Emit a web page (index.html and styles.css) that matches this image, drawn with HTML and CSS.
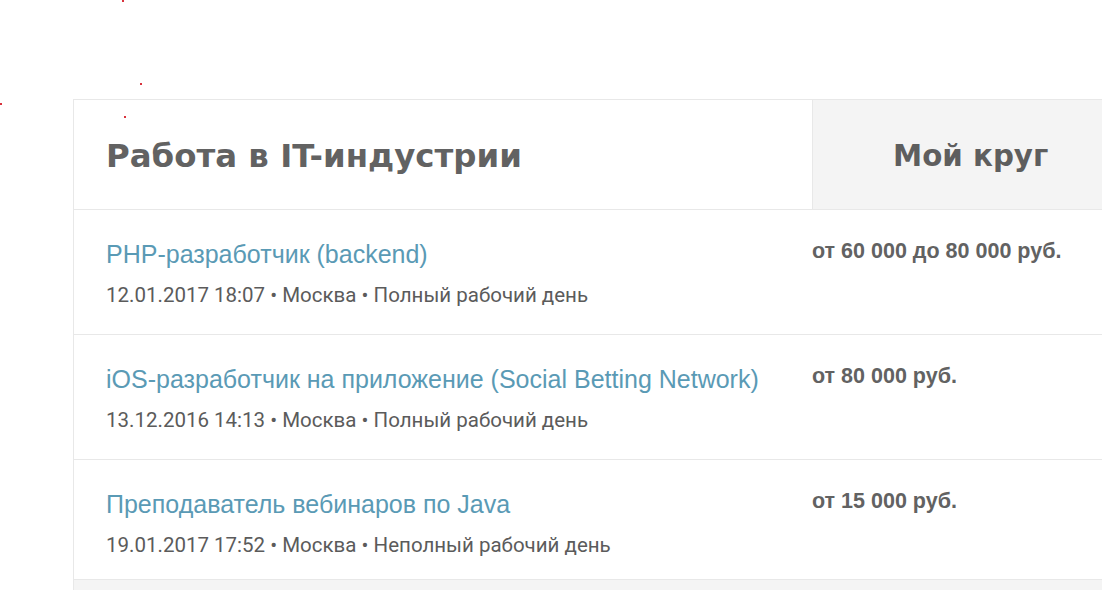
FILE: index.html
```html
<!DOCTYPE html>
<html lang="ru">
<head>
  <meta charset="UTF-8">
  <title>Работа в IT-индустрии</title>
  <link rel="stylesheet" href="styles.css">
</head>
<body>
  <span class="dot" style="left:122px;top:0px"></span>
  <span class="dot" style="left:140px;top:83px"></span>
  <span class="dot" style="left:0px;top:103px"></span>
  <span class="dot" style="left:124px;top:116px"></span>

  <div class="widget">
    <div class="widget-head">
      <h1>Работа в IT-индустрии</h1>
      <div class="brand">Мой круг</div>
    </div>

    <div class="job">
      <div class="job-info">
        <a href="#" class="job-title">PHP-разработчик (backend)</a>
        <div class="job-meta">12.01.2017 18:07 • Москва • Полный рабочий день</div>
      </div>
      <div class="job-salary">от 60 000 до 80 000 руб.</div>
    </div>

    <div class="job">
      <div class="job-info">
        <a href="#" class="job-title">iOS-разработчик на приложение (Social Betting Network)</a>
        <div class="job-meta">13.12.2016 14:13 • Москва • Полный рабочий день</div>
      </div>
      <div class="job-salary">от 80 000 руб.</div>
    </div>

    <div class="job last">
      <div class="job-info">
        <a href="#" class="job-title">Преподаватель вебинаров по Java</a>
        <div class="job-meta">19.01.2017 17:52 • Москва • Неполный рабочий день</div>
      </div>
      <div class="job-salary">от 15 000 руб.</div>
    </div>

    <div class="widget-foot"></div>
  </div>
</body>
</html>
```

FILE: styles.css
```css
body {
  margin: 0;
  padding-top: 99px;
  background-color: #ffffff;
  overflow: hidden;
  font-family: "Liberation Sans", Arial, sans-serif;
  color: #666;
}
.dot {
  position: absolute;
  width: 2px;
  height: 2px;
  background-color: #d8323c;
}
.widget {
  margin-left: 73px;
  border-top: 1px solid #e8e8e8;
  border-left: 1px solid #e8e8e8;
}
.widget-head {
  display: flex;
  height: 109px;
  border-bottom: 1px solid #e8e8e8;
}
.widget-head h1 {
  width: 706px;
  margin: 0;
  padding-left: 32px;
  font-family: "DejaVu Sans", Verdana, sans-serif;
  font-size: 32.4px;
  font-weight: bold;
  line-height: 113px;
  color: #626262;
  border-right: 1px solid #e8e8e8;
}
.brand {
  flex: 1;
  padding-left: 80px;
  background-color: #f4f4f4;
  font-family: "DejaVu Sans", Verdana, sans-serif;
  font-size: 29.3px;
  font-weight: bold;
  line-height: 113px;
  color: #5e5e5e;
  white-space: nowrap;
}
.job {
  display: flex;
  height: 124px;
  border-bottom: 1px solid #e8e8e8;
}
.job.last {
  height: 119px;
}
.job-info {
  width: 706px;
  padding: 27px 0 0 32px;
}
.job-title {
  display: block;
  font-size: 25px;
  color: #5a9ab5;
  text-decoration: none;
  line-height: 34px;
}
.job-meta {
  margin-top: 12px;
  font-family: "Roboto", "Liberation Sans", sans-serif;
  font-size: 20.5px;
  color: #5b5b5b;
}
.job-salary {
  flex: 1;
  padding-top: 29px;
  font-size: 21.5px;
  font-weight: bold;
  color: #626262;
  white-space: nowrap;
}
.widget-foot {
  height: 20px;
  background-color: #f4f4f4;
}
```
